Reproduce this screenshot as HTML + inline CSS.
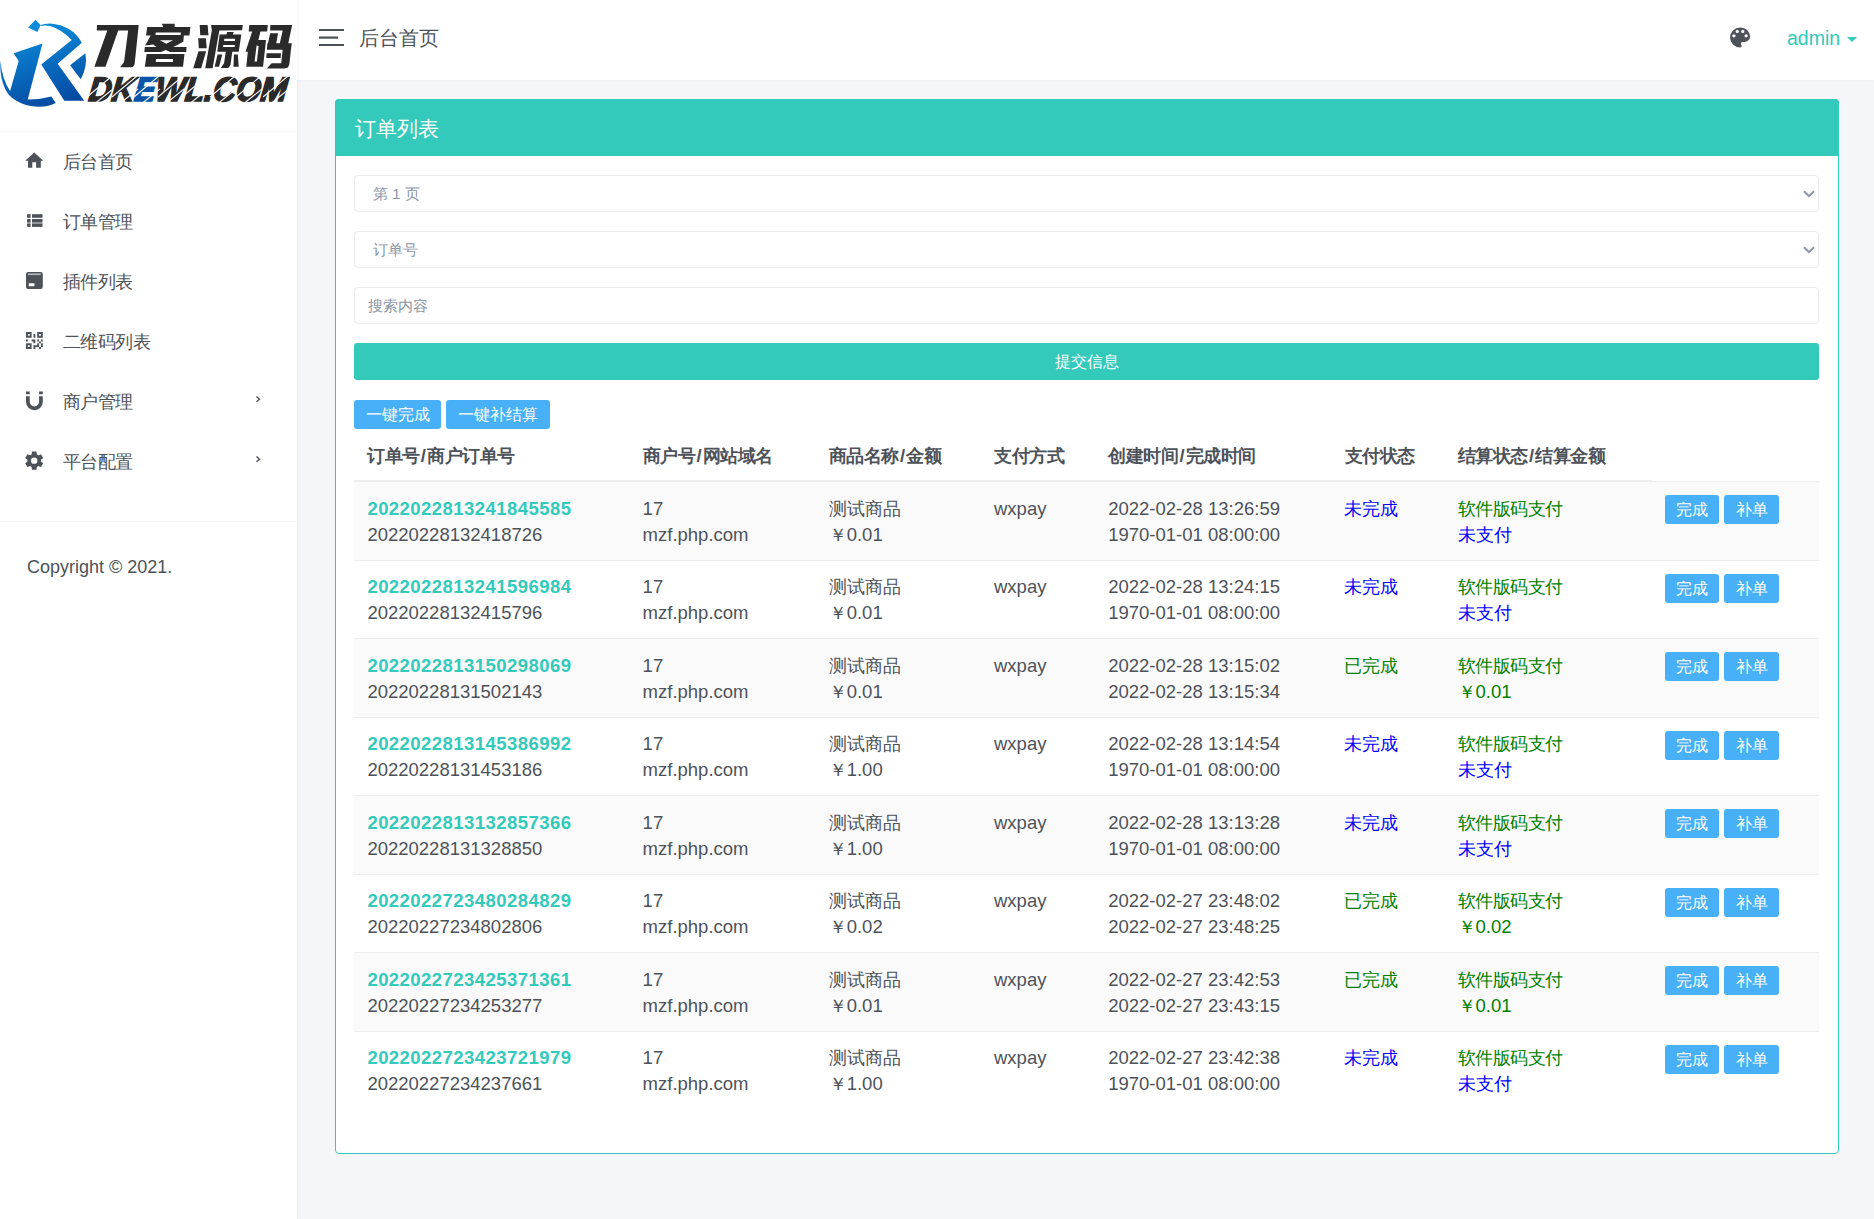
<!DOCTYPE html>
<html><head><meta charset="utf-8">
<style>
*{box-sizing:border-box;margin:0;padding:0}
html,body{width:1874px;height:1219px;overflow:hidden}
body{font-family:"Liberation Sans",sans-serif;background:#f5f6fa;color:#4d5259;position:relative;font-size:18.5px}
.side{position:absolute;left:0;top:0;width:297px;height:1219px;background:#fff;box-shadow:0 0 4px rgba(0,0,0,.07);z-index:2}
.logo{position:absolute;left:0;top:0;width:297px;height:132px;border-bottom:1px solid #f6f7f6}
.mi{position:absolute;left:0;width:297px;height:60px}
.mi svg{position:absolute;left:0;top:0}
.mi .tx{position:absolute;left:63px;top:0.2px;font-size:18px;letter-spacing:-0.55px;line-height:20px;color:#4d5259;white-space:nowrap}
.mi .arr{position:absolute;left:255px;top:-4px}
.sep2{position:absolute;left:0;top:521px;width:297px;height:1px;background:#f3f3f3}
.copy{position:absolute;left:27px;top:556px;font-size:18px;line-height:22px;color:#4d5259;white-space:nowrap}
.top{position:absolute;left:297px;top:0;width:1577px;height:80px;background:#fff;box-shadow:0 1px 3px rgba(0,0,20,.045)}
.card{position:absolute;left:335px;top:99px;width:1504px;height:1055px;border:1px solid #33cabb;border-radius:4px;background:#fff}
.card-h{position:absolute;left:-1px;top:-1px;width:1504px;height:57px;background:#33cabb;border-radius:4px 4px 0 0}
.card-h span{position:absolute;left:20px;top:17.5px;font-size:20.6px;line-height:24px;color:#fff}
.fc{position:absolute;left:18px;width:1465px;height:37px;border:1px solid #ebebeb;border-radius:4px;background:#fff;font-size:15px;color:#8b95a5}
.fc span{position:absolute;left:18px;top:8px;line-height:20px;white-space:nowrap}
.chev{position:absolute;left:1448px;top:14px}
.btn-sub{position:absolute;left:18px;top:243px;width:1465px;height:37px;background:#33cabb;border-radius:3px;color:#fff;font-size:16px;text-align:center;line-height:37px}
.bi{position:absolute;top:300px;height:29px;background:#48b0f7;border-radius:3px;color:#fff;font-size:16px;line-height:29px;text-align:center;white-space:nowrap}
.th{position:absolute;top:343.5px;font-size:17.7px;letter-spacing:-0.45px;line-height:24px;font-weight:bold;color:#4d5259;white-space:nowrap}
.thb{position:absolute;left:18px;top:379.5px;width:1298px;height:2px;background:#eceeef}
.thb2{position:absolute;left:1316px;top:381px;width:167px;height:1px;background:#eceeef}
.row{position:absolute;left:18px;width:1465px;border-bottom:1px solid #eceeef}
.row.odd{background:#fafafa}
.row.last{border-bottom:0}
.cell{position:absolute;line-height:26px;white-space:nowrap;color:#4d5259}
.c{font-size:17.7px}
.y{font-size:17.7px}
.sl{font-style:normal;margin:0 1.6px 0 1.2px;font-size:18.5px}
.ono{color:#33cabb;font-weight:bold;letter-spacing:.45px}
.g{color:#008000}
.bl{color:#0000ff}
.rb{position:absolute;height:29px;background:#48b0f7;border-radius:3px;color:#fff;font-size:16px;line-height:29px;text-align:center}
</style></head><body>
<div class="side">
  <div class="logo"><svg width="297" height="131" viewBox="0 0 297 131" style="position:absolute;left:0;top:0">
<defs><linearGradient id="lg" gradientUnits="userSpaceOnUse" x1="30" y1="18" x2="55" y2="108"><stop offset="0" stop-color="#0c93e0"/><stop offset="1" stop-color="#0448a0"/></linearGradient></defs>
<g fill="url(#lg)">
<path d="M28.1 27.5 L35.5 19.7 L40.5 25.1 L37.4 32.1 Z"/>
<path d="M40.5 25.1 Q45 23.4 50 23.5 Q72 25 81.8 42.7 L57.7 63.7 L84.2 100.7 L64.3 100.7 L41.3 64.5 L71.7 39.9 Q62 29.5 50 25.9 Q45 25.2 40.5 25.9 Z"/>
<path d="M13.6 53.2 L42.5 43.4 L27.7 99.6 Q40 99.5 51.4 96.4 L55.7 103 C45 109 22 108.5 9 95 C3 87 -0.5 75 0.5 61 Q2 79 10.1 91 L18.7 61 Z"/>
<path d="M85.3 53.2 L70.1 65.3 L80.7 79.3 Q88 66 85.3 53.2 Z"/>
</g>
<path fill="#2a2a2a" d="M97.04 25.04 L138.71 25.04 L134.60 64.36 L133.13 66.71 L131.08 67.30 L120.22 67.30 L124.04 62.01 L128.15 30.62 L118.17 30.62 L105.55 66.71 L94.40 66.71 L107.31 30.62 L96.75 30.62 Z M161.89 23.87 L174.80 23.87 L174.51 27.39 L163.36 27.39 Z M147.22 27.10 L190.35 27.10 L189.47 35.61 L180.67 35.61 L180.85 32.38 L155.73 32.38 L155.43 35.61 L146.04 35.61 Z M151.03 35.02 L183.90 35.02 L183.31 41.77 L173.33 47.05 L186.54 47.05 L186.24 52.04 L170.11 52.04 L165.70 49.98 L161.01 52.04 L144.28 52.04 L144.87 47.05 L156.31 47.05 L153.38 44.41 L145.16 45.58 Z M146.63 54.09 L184.48 54.09 L183.02 66.71 L144.87 66.71 Z M199.68 25.04 L207.61 25.04 L208.49 35.31 L200.27 35.31 Z M198.22 38.25 L205.85 38.25 L206.73 48.22 L198.80 48.22 Z M198.51 51.16 L206.14 51.16 L201.15 68.18 L193.23 68.18 Z M211.13 25.04 L242.82 25.04 L242.11 30.32 L219.34 30.44 L212.59 68.18 L205.26 68.18 L211.83 30.44 Z M219.64 34.43 L241.35 34.43 L238.71 51.74 L217.29 51.74 Z M227.27 32.08 L233.72 32.08 L232.84 34.43 L226.38 34.43 Z M225.80 51.74 L232.25 51.74 L230.49 64.95 L228.15 67.88 L220.81 67.88 L224.04 63.19 Z M217.58 54.38 L222.28 54.38 L219.05 66.71 L214.65 66.71 Z M234.01 54.38 L237.83 54.38 L238.71 66.71 L233.43 66.71 Z M249.27 25.04 L267.76 25.04 L267.17 31.50 L260.42 31.50 L258.37 40.01 L266.00 40.01 L263.06 66.71 L246.34 66.71 L247.81 51.74 L245.46 51.74 L252.21 31.50 L248.69 31.50 Z M270.40 25.04 L292.11 25.04 L288.30 43.23 L279.79 43.23 L282.72 30.62 L270.11 30.62 Z M270.11 33.26 L278.03 33.26 L276.27 43.23 L268.05 43.23 Z M267.46 43.23 L291.82 43.23 L290.94 49.69 L266.88 49.69 Z M282.61 49.69 L290.94 49.69 L289.30 64.36 L288.00 67.59 L284.48 68.47 L266.88 68.47 L271.57 63.19 L281.26 63.19 Z M266.58 53.21 L280.96 53.21 L280.67 57.91 L266.29 57.91 Z"/><path fill="#ffffff" d="M159.84 40.30 L173.04 40.30 L166.29 43.82 Z M156.02 59.08 L173.04 59.08 L172.75 62.01 L155.73 62.01 Z M224.33 38.83 L235.19 38.83 L234.89 41.00 L224.04 41.00 Z M223.33 44.88 L234.89 44.88 L234.60 47.05 L223.04 47.05 Z M256.61 45.58 L258.66 45.88 L256.90 61.43 L254.55 61.43 Z"/>
<text x="89" y="101.2" font-family="Liberation Sans" font-size="34" font-weight="bold" font-style="italic" fill="#2a2a2a" stroke="#2a2a2a" stroke-width="1.7" textLength="198" lengthAdjust="spacingAndGlyphs" transform="translate(9.6 0) skewX(-6)">DK<tspan fill="#0a55a8" stroke="#0a55a8">E</tspan>WL.COM</text>
<g stroke="#ffffff" stroke-width="1.1" opacity="0.95"><line x1="87" y1="97" x2="112" y2="76"/><line x1="93" y1="105" x2="113" y2="89"/><line x1="112" y1="97" x2="137" y2="76"/><line x1="118" y1="105" x2="138" y2="89"/><line x1="134" y1="97" x2="159" y2="76"/><line x1="140" y1="105" x2="160" y2="89"/><line x1="158" y1="97" x2="183" y2="76"/><line x1="164" y1="105" x2="184" y2="89"/><line x1="182" y1="97" x2="207" y2="76"/><line x1="188" y1="105" x2="208" y2="89"/><line x1="210" y1="97" x2="235" y2="76"/><line x1="216" y1="105" x2="236" y2="89"/><line x1="236" y1="97" x2="261" y2="76"/><line x1="242" y1="105" x2="262" y2="89"/><line x1="263" y1="97" x2="288" y2="76"/><line x1="269" y1="105" x2="289" y2="89"/></g>
</svg></div>
<svg width="297" height="480" viewBox="0 0 297 480" style="position:absolute;left:0;top:0" fill="#4d5259">
<path d="M25.2 160.8 L34.25 152.6 L43.3 160.8 L40.8 160.8 L40.8 167.8 L36.1 167.8 L36.1 162.2 L32.3 162.2 L32.3 167.8 L28 167.8 L28 160.8 Z"/>
<rect x="27.1" y="214.2" width="3.5" height="3.6"/><rect x="32" y="214.2" width="10.5" height="3.6"/>
<rect x="27.1" y="219" width="3.5" height="3.6"/><rect x="32" y="219" width="10.5" height="3.6"/>
<rect x="27.1" y="223.4" width="3.5" height="3.5"/><rect x="32" y="223.4" width="10.5" height="3.5"/>
<rect x="26" y="272" width="16.8" height="16.9" rx="2.2"/>
<rect x="28" y="273.4" width="12.8" height="1.7" fill="#b4b7bb"/>
<rect x="28.7" y="283.2" width="5.8" height="3" rx="0.6" fill="#fff"/>
<g transform="translate(23.2 329.3) scale(0.933)"><path d="M3,11H5V13H3V11M11,5H13V9H11V5M9,11H13V15H11V13H9V11M15,11H17V13H19V11H21V13H19V15H21V19H19V21H17V19H13V21H11V17H15V15H17V13H15V11M19,19V15H17V19H19M15,3H21V9H15V3M17,5V7H19V5H17M3,3H9V9H3V3M5,5V7H7V5H5M3,15H9V21H3V15M5,17V19H7V17H5Z"/></g>
<g transform="translate(23.2 389.6) scale(0.933)"><path d="M3,7V13A9,9 0 0,0 12,22A9,9 0 0,0 21,13V7H17V13A5,5 0 0,1 12,18A5,5 0 0,1 7,13V7M17,5H21V2H17M3,5H7V2H3"/></g>
<g transform="translate(23.3 449.8) scale(0.908)"><path d="M12,15.5A3.5,3.5 0 0,1 8.5,12A3.5,3.5 0 0,1 12,8.5A3.5,3.5 0 0,1 15.5,12A3.5,3.5 0 0,1 12,15.5M19.43,12.97C19.47,12.65 19.5,12.33 19.5,12C19.5,11.67 19.47,11.34 19.43,11L21.54,9.37C21.73,9.22 21.78,8.95 21.66,8.73L19.66,5.27C19.54,5.05 19.27,4.96 19.05,5.05L16.56,6.05C16.04,5.66 15.5,5.32 14.87,5.07L14.5,2.42C14.46,2.18 14.25,2 14,2H10C9.75,2 9.54,2.180 9.5,2.42L9.13,5.07C8.5,5.320 7.96,5.66 7.44,6.05L4.95,5.05C4.73,4.96 4.46,5.05 4.34,5.27L2.34,8.73C2.21,8.95 2.27,9.22 2.46,9.37L4.57,11C4.53,11.34 4.5,11.67 4.5,12C4.5,12.33 4.53,12.65 4.57,12.97L2.46,14.63C2.27,14.78 2.21,15.05 2.34,15.27L4.34,18.73C4.46,18.95 4.73,19.03 4.95,18.95L7.44,17.94C7.96,18.34 8.5,18.68 9.13,18.93L9.5,21.58C9.54,21.82 9.75,22 10,22H14C14.25,22 14.46,21.82 14.5,21.58L14.87,18.93C15.5,18.67 16.04,18.34 16.56,17.94L19.05,18.95C19.27,19.03 19.54,18.95 19.66,18.73L21.66,15.27C21.78,15.05 21.73,14.78 21.54,14.63L19.43,12.97Z"/></g>
<path d="M256.5 396.5 L259.5 399.2 L256.5 401.8" fill="none" stroke="#4d5259" stroke-width="1.4"/>
<path d="M256.5 456.5 L259.5 459.2 L256.5 461.8" fill="none" stroke="#4d5259" stroke-width="1.4"/>
</svg>
<div class="mi" style="top:152px"><span class="tx">后台首页</span></div>
<div class="mi" style="top:212px"><span class="tx">订单管理</span></div>
<div class="mi" style="top:272px"><span class="tx">插件列表</span></div>
<div class="mi" style="top:332px"><span class="tx">二维码列表</span></div>
<div class="mi" style="top:392px"><span class="tx">商户管理</span></div>
<div class="mi" style="top:452px"><span class="tx">平台配置</span></div>
  <div class="sep2"></div>
  <div class="copy">Copyright © 2021.</div>
</div>
<div class="top"><svg width="1577" height="80" viewBox="297 0 1577 80" style="position:absolute;left:0;top:0">
<rect x="319" y="29" width="25" height="2" fill="#4d5259"/>
<rect x="319" y="36.5" width="19" height="2.2" fill="#4d5259"/>
<rect x="319" y="44" width="25" height="2" fill="#4d5259"/>
<g transform="translate(1726.7 24.2) scale(1.11)" fill="#4d5259"><path d="M17.5,12A1.5,1.5 0 0,1 16,10.5A1.5,1.5 0 0,1 17.5,9A1.5,1.5 0 0,1 19,10.5A1.5,1.5 0 0,1 17.5,12M14.5,8A1.5,1.5 0 0,1 13,6.5A1.5,1.5 0 0,1 14.5,5A1.5,1.5 0 0,1 16,6.5A1.5,1.5 0 0,1 14.5,8M9.5,8A1.5,1.5 0 0,1 8,6.5A1.5,1.5 0 0,1 9.5,5A1.5,1.5 0 0,1 11,6.5A1.5,1.5 0 0,1 9.5,8M6.5,12A1.5,1.5 0 0,1 5,10.5A1.5,1.5 0 0,1 6.5,9A1.5,1.5 0 0,1 8,10.5A1.5,1.5 0 0,1 6.5,12M12,3A9,9 0 0,0 3,12A9,9 0 0,0 12,21A1.5,1.5 0 0,0 13.5,19.5C13.5,19.11 13.35,18.76 13.11,18.5C12.88,18.23 12.73,17.88 12.73,17.5A1.5,1.5 0 0,1 14.23,16H16A5,5 0 0,0 21,11C21,6.58 16.97,3 12,3Z"/></g>
<path d="M1847 37 L1857 37 L1852 42 Z" fill="#33cabb"/>
</svg>
<span style="position:absolute;left:62px;top:26px;font-size:20px;line-height:24px;color:#4d5259;white-space:nowrap">后台首页</span>
<span style="position:absolute;left:1490px;top:25.5px;font-size:19.5px;line-height:24px;color:#33cabb;white-space:nowrap">admin</span>
</div>
<div class="card">
  <div class="card-h"><span>订单列表</span></div>
  <div class="fc" style="top:75px"><span>第 1 页</span><svg class="chev" width="12" height="8" viewBox="0 0 12 8"><path d="M1 1.2 L6 6.2 L11 1.2" fill="none" stroke="#8b95a5" stroke-width="2"/></svg></div>
  <div class="fc" style="top:131px"><span>订单号</span><svg class="chev" width="12" height="8" viewBox="0 0 12 8"><path d="M1 1.2 L6 6.2 L11 1.2" fill="none" stroke="#8b95a5" stroke-width="2"/></svg></div>
  <div class="fc" style="top:187px"><span style="left:13px">搜索内容</span></div>
  <div class="btn-sub">提交信息</div>
  <div class="bi" style="left:18px;width:87px">一键完成</div>
  <div class="bi" style="left:110px;width:104px">一键补结算</div>
  <div class="th" style="left:31px">订单号<i class="sl">/</i>商户订单号</div>
  <div class="th" style="left:306.6px">商户号<i class="sl">/</i>网站域名</div>
  <div class="th" style="left:492.7px">商品名称<i class="sl">/</i>金额</div>
  <div class="th" style="left:658px">支付方式</div>
  <div class="th" style="left:772px">创建时间<i class="sl">/</i>完成时间</div>
  <div class="th" style="left:1008.5px">支付状态</div>
  <div class="th" style="left:1121.5px">结算状态<i class="sl">/</i>结算金额</div>
  <div class="thb"></div><div class="thb2"></div>
<div class="row odd" style="top:382px;height:79px"></div>
<div class="cell" style="left:31.4px;top:395.80px"><b class="ono">2022022813241845585</b><br>20220228132418726</div>
<div class="cell" style="left:306.6px;top:395.80px">17<br>mzf.php.com</div>
<div class="cell" style="left:492.7px;top:395.80px"><span class="c">测试商品</span><br><span class="y">￥</span>0.01</div>
<div class="cell" style="left:658px;top:395.80px">wxpay</div>
<div class="cell" style="left:772.2px;top:395.80px">2022-02-28 13:26:59<br>1970-01-01 08:00:00</div>
<div class="cell" style="left:1007.5px;top:395.80px"><span class="c bl">未完成</span></div>
<div class="cell" style="left:1121.5px;top:395.80px"><span class="c g" style="letter-spacing:-0.5px">软件版码支付</span><br><span class="c bl">未支付</span></div>
<div class="rb" style="left:1329px;width:54px;top:395.00px">完成</div><div class="rb" style="left:1388px;width:55px;top:395.00px">补单</div>
<div class="row" style="top:461px;height:78px"></div>
<div class="cell" style="left:31.4px;top:474.30px"><b class="ono">2022022813241596984</b><br>20220228132415796</div>
<div class="cell" style="left:306.6px;top:474.30px">17<br>mzf.php.com</div>
<div class="cell" style="left:492.7px;top:474.30px"><span class="c">测试商品</span><br><span class="y">￥</span>0.01</div>
<div class="cell" style="left:658px;top:474.30px">wxpay</div>
<div class="cell" style="left:772.2px;top:474.30px">2022-02-28 13:24:15<br>1970-01-01 08:00:00</div>
<div class="cell" style="left:1007.5px;top:474.30px"><span class="c bl">未完成</span></div>
<div class="cell" style="left:1121.5px;top:474.30px"><span class="c g" style="letter-spacing:-0.5px">软件版码支付</span><br><span class="c bl">未支付</span></div>
<div class="rb" style="left:1329px;width:54px;top:473.50px">完成</div><div class="rb" style="left:1388px;width:55px;top:473.50px">补单</div>
<div class="row odd" style="top:539px;height:79px"></div>
<div class="cell" style="left:31.4px;top:552.80px"><b class="ono">2022022813150298069</b><br>20220228131502143</div>
<div class="cell" style="left:306.6px;top:552.80px">17<br>mzf.php.com</div>
<div class="cell" style="left:492.7px;top:552.80px"><span class="c">测试商品</span><br><span class="y">￥</span>0.01</div>
<div class="cell" style="left:658px;top:552.80px">wxpay</div>
<div class="cell" style="left:772.2px;top:552.80px">2022-02-28 13:15:02<br>2022-02-28 13:15:34</div>
<div class="cell" style="left:1007.5px;top:552.80px"><span class="c g">已完成</span></div>
<div class="cell" style="left:1121.5px;top:552.80px"><span class="c g" style="letter-spacing:-0.5px">软件版码支付</span><br><span class="g"><span class="y">￥</span>0.01</span></div>
<div class="rb" style="left:1329px;width:54px;top:552.00px">完成</div><div class="rb" style="left:1388px;width:55px;top:552.00px">补单</div>
<div class="row" style="top:618px;height:78px"></div>
<div class="cell" style="left:31.4px;top:631.30px"><b class="ono">2022022813145386992</b><br>20220228131453186</div>
<div class="cell" style="left:306.6px;top:631.30px">17<br>mzf.php.com</div>
<div class="cell" style="left:492.7px;top:631.30px"><span class="c">测试商品</span><br><span class="y">￥</span>1.00</div>
<div class="cell" style="left:658px;top:631.30px">wxpay</div>
<div class="cell" style="left:772.2px;top:631.30px">2022-02-28 13:14:54<br>1970-01-01 08:00:00</div>
<div class="cell" style="left:1007.5px;top:631.30px"><span class="c bl">未完成</span></div>
<div class="cell" style="left:1121.5px;top:631.30px"><span class="c g" style="letter-spacing:-0.5px">软件版码支付</span><br><span class="c bl">未支付</span></div>
<div class="rb" style="left:1329px;width:54px;top:630.50px">完成</div><div class="rb" style="left:1388px;width:55px;top:630.50px">补单</div>
<div class="row odd" style="top:696px;height:79px"></div>
<div class="cell" style="left:31.4px;top:709.80px"><b class="ono">2022022813132857366</b><br>20220228131328850</div>
<div class="cell" style="left:306.6px;top:709.80px">17<br>mzf.php.com</div>
<div class="cell" style="left:492.7px;top:709.80px"><span class="c">测试商品</span><br><span class="y">￥</span>1.00</div>
<div class="cell" style="left:658px;top:709.80px">wxpay</div>
<div class="cell" style="left:772.2px;top:709.80px">2022-02-28 13:13:28<br>1970-01-01 08:00:00</div>
<div class="cell" style="left:1007.5px;top:709.80px"><span class="c bl">未完成</span></div>
<div class="cell" style="left:1121.5px;top:709.80px"><span class="c g" style="letter-spacing:-0.5px">软件版码支付</span><br><span class="c bl">未支付</span></div>
<div class="rb" style="left:1329px;width:54px;top:709.00px">完成</div><div class="rb" style="left:1388px;width:55px;top:709.00px">补单</div>
<div class="row" style="top:775px;height:78px"></div>
<div class="cell" style="left:31.4px;top:788.30px"><b class="ono">2022022723480284829</b><br>20220227234802806</div>
<div class="cell" style="left:306.6px;top:788.30px">17<br>mzf.php.com</div>
<div class="cell" style="left:492.7px;top:788.30px"><span class="c">测试商品</span><br><span class="y">￥</span>0.02</div>
<div class="cell" style="left:658px;top:788.30px">wxpay</div>
<div class="cell" style="left:772.2px;top:788.30px">2022-02-27 23:48:02<br>2022-02-27 23:48:25</div>
<div class="cell" style="left:1007.5px;top:788.30px"><span class="c g">已完成</span></div>
<div class="cell" style="left:1121.5px;top:788.30px"><span class="c g" style="letter-spacing:-0.5px">软件版码支付</span><br><span class="g"><span class="y">￥</span>0.02</span></div>
<div class="rb" style="left:1329px;width:54px;top:787.50px">完成</div><div class="rb" style="left:1388px;width:55px;top:787.50px">补单</div>
<div class="row odd" style="top:853px;height:79px"></div>
<div class="cell" style="left:31.4px;top:866.80px"><b class="ono">2022022723425371361</b><br>20220227234253277</div>
<div class="cell" style="left:306.6px;top:866.80px">17<br>mzf.php.com</div>
<div class="cell" style="left:492.7px;top:866.80px"><span class="c">测试商品</span><br><span class="y">￥</span>0.01</div>
<div class="cell" style="left:658px;top:866.80px">wxpay</div>
<div class="cell" style="left:772.2px;top:866.80px">2022-02-27 23:42:53<br>2022-02-27 23:43:15</div>
<div class="cell" style="left:1007.5px;top:866.80px"><span class="c g">已完成</span></div>
<div class="cell" style="left:1121.5px;top:866.80px"><span class="c g" style="letter-spacing:-0.5px">软件版码支付</span><br><span class="g"><span class="y">￥</span>0.01</span></div>
<div class="rb" style="left:1329px;width:54px;top:866.00px">完成</div><div class="rb" style="left:1388px;width:55px;top:866.00px">补单</div>
<div class="row last" style="top:932px;height:78px"></div>
<div class="cell" style="left:31.4px;top:945.30px"><b class="ono">2022022723423721979</b><br>20220227234237661</div>
<div class="cell" style="left:306.6px;top:945.30px">17<br>mzf.php.com</div>
<div class="cell" style="left:492.7px;top:945.30px"><span class="c">测试商品</span><br><span class="y">￥</span>1.00</div>
<div class="cell" style="left:658px;top:945.30px">wxpay</div>
<div class="cell" style="left:772.2px;top:945.30px">2022-02-27 23:42:38<br>1970-01-01 08:00:00</div>
<div class="cell" style="left:1007.5px;top:945.30px"><span class="c bl">未完成</span></div>
<div class="cell" style="left:1121.5px;top:945.30px"><span class="c g" style="letter-spacing:-0.5px">软件版码支付</span><br><span class="c bl">未支付</span></div>
<div class="rb" style="left:1329px;width:54px;top:944.50px">完成</div><div class="rb" style="left:1388px;width:55px;top:944.50px">补单</div>
</div>
</body></html>
